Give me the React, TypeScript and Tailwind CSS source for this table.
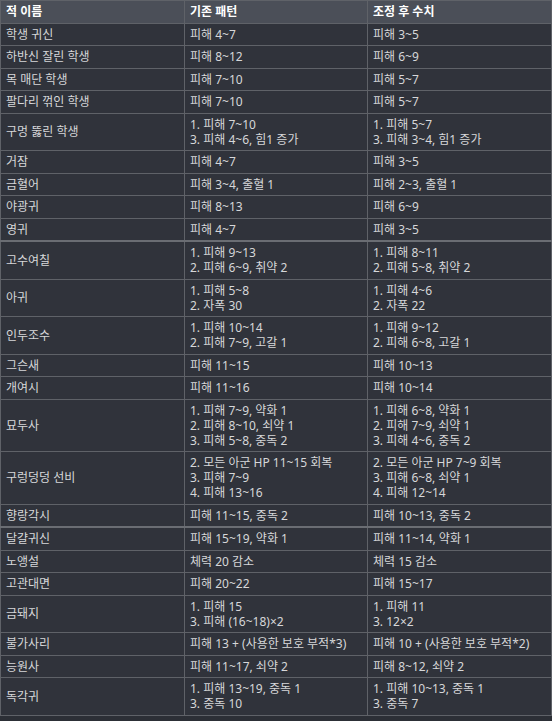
import { memo } from 'react';

type Row = { name: string; before: string[]; after: string[]; thick?: boolean };

const rows: Row[] = [
  { name: '학생 귀신', before: ['피해 4~7'], after: ['피해 3~5'] },
  { name: '하반신 잘린 학생', before: ['피해 8~12'], after: ['피해 6~9'] },
  { name: '목 매단 학생', before: ['피해 7~10'], after: ['피해 5~7'] },
  { name: '팔다리 꺾인 학생', before: ['피해 7~10'], after: ['피해 5~7'] },
  { name: '구멍 뚫린 학생', before: ['1. 피해 7~10', '3. 피해 4~6, 힘1 증가'], after: ['1. 피해 5~7', '3. 피해 3~4, 힘1 증가'] },
  { name: '거잠', before: ['피해 4~7'], after: ['피해 3~5'] },
  { name: '금혈어', before: ['피해 3~4, 출혈 1'], after: ['피해 2~3, 출혈 1'] },
  { name: '야광귀', before: ['피해 8~13'], after: ['피해 6~9'] },
  { name: '영귀', before: ['피해 4~7'], after: ['피해 3~5'] },
  { name: '고수여칠', before: ['1. 피해 9~13', '2. 피해 6~9, 취약 2'], after: ['1. 피해 8~11', '2. 피해 5~8, 취약 2'], thick: true },
  { name: '아귀', before: ['1. 피해 5~8', '2. 자폭 30'], after: ['1. 피해 4~6', '2. 자폭 22'] },
  { name: '인두조수', before: ['1. 피해 10~14', '2. 피해 7~9, 고갈 1'], after: ['1. 피해 9~12', '2. 피해 6~8, 고갈 1'] },
  { name: '그슨새', before: ['피해 11~15'], after: ['피해 10~13'] },
  { name: '개여시', before: ['피해 11~16'], after: ['피해 10~14'] },
  { name: '묘두사', before: ['1. 피해 7~9, 약화 1', '2. 피해 8~10, 쇠약 1', '3. 피해 5~8, 중독 2'], after: ['1. 피해 6~8, 약화 1', '2. 피해 7~9, 쇠약 1', '3. 피해 4~6, 중독 2'] },
  { name: '구렁덩덩 선비', before: ['2. 모든 아군 HP 11~15 회복', '3. 피해 7~9', '4. 피해 13~16'], after: ['2. 모든 아군 HP 7~9 회복', '3. 피해 6~8, 쇠약 1', '4. 피해 12~14'] },
  { name: '향랑각시', before: ['피해 11~15, 중독 2'], after: ['피해 10~13, 중독 2'] },
  { name: '달걀귀신', before: ['피해 15~19, 약화 1'], after: ['피해 11~14, 약화 1'], thick: true },
  { name: '노앵설', before: ['체력 20 감소'], after: ['체력 15 감소'] },
  { name: '고관대면', before: ['피해 20~22'], after: ['피해 15~17'] },
  { name: '금돼지', before: ['1. 피해 15', '3. 피해 (16~18)×2'], after: ['1. 피해 11', '3. 12×2'] },
  { name: '불가사리', before: ['피해 13 + (사용한 보호 부적*3)'], after: ['피해 10 + (사용한 보호 부적*2)'] },
  { name: '능원사', before: ['피해 11~17, 쇠약 2'], after: ['피해 8~12, 쇠약 2'] },
  { name: '독각귀', before: ['1. 피해 13~19, 중독 1', '3. 중독 10'], after: ['1. 피해 10~13, 중독 1', '3. 중독 7'] },
];

const cell = 'border border-[#5f6268] px-[5px] pt-[3px] pb-[3.5px] align-middle';

const App = () => {
  return (
    <div
      className="min-h-[721px] w-[552px] bg-[#2c2f36] text-[12px] leading-[15px] text-[#d6d7d9]"
      style={{ fontFamily: '"Noto Sans", "Noto Sans CJK KR", sans-serif' }}
    >
      <table className="w-[551px] table-fixed border-collapse bg-[#30333b]">
        <colgroup>
          <col className="w-[184px]" />
          <col className="w-[183px]" />
          <col className="w-[184px]" />
        </colgroup>
        <thead>
          <tr className="bg-[#4b4f58] text-left font-bold text-white">
            <th className={cell}>적 이름</th>
            <th className={cell}>기존 패턴</th>
            <th className={cell}>조정 후 수치</th>
          </tr>
        </thead>
        <tbody>
          {rows.map((r) => (
            <tr key={r.name} className={r.thick ? 'border-t-2 border-t-[#6a6d73]' : ''}>
              <td className={cell}>{r.name}</td>
              <td className={cell}>
                {r.before.map((l) => (
                  <div key={l}>{l}</div>
                ))}
              </td>
              <td className={cell}>
                {r.after.map((l) => (
                  <div key={l}>{l}</div>
                ))}
              </td>
            </tr>
          ))}
        </tbody>
      </table>
    </div>
  );
};

export default memo(App);
